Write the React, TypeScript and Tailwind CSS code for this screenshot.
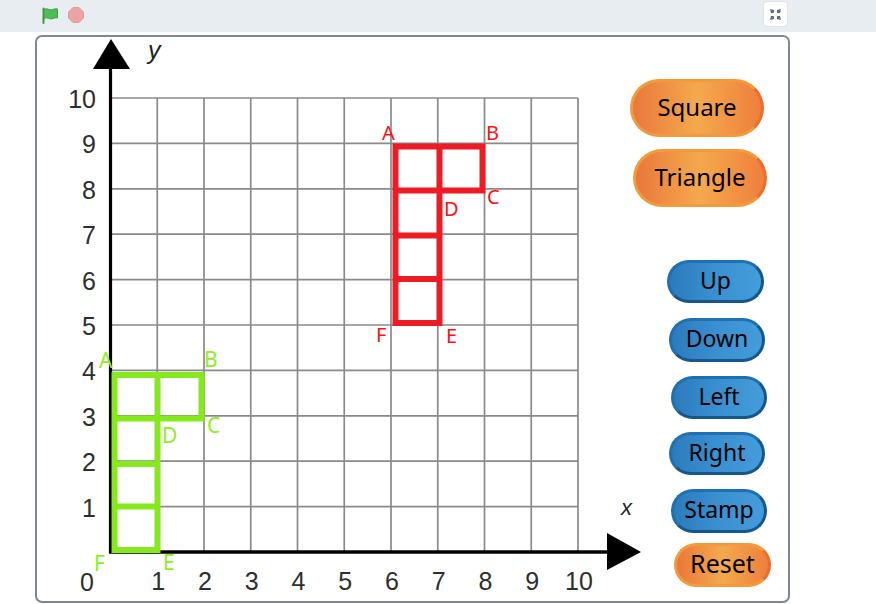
import React from "react";

const gx = (k: number) => 110.5 + 46.75 * k;
const gy = (k: number) => 552 - 45.4 * k;

const ORANGE =
  "border-[3px] border-[#f39a3a] border-r-[#ec6c2c] bg-linear-to-r from-[#e9773c] via-[#f4a94d] to-[#ee7f3c]";
const BLUE =
  "border-[3px] border-[#1f70b0] border-b-[#15578d] border-r-[#15578d] bg-linear-to-r from-[#2c7bbd] via-[#3a90d0] to-[#449cda]";

function Btn({ label, cls }: { label: string; cls: string }) {
  return (
    <div
      className={`absolute flex items-center justify-center rounded-full text-black leading-none pb-[3px] font-['Noto_Sans','Open_Sans',sans-serif] ${cls}`}
    >
      {label}
    </div>
  );
}

export default function App() {
  const xs = Array.from({ length: 11 }, (_, i) => i);
  const lab = "font-['Liberation_Sans',Arial,sans-serif]";
  const letter = "font-['Noto_Sans','Open_Sans',sans-serif]";
  return (
    <div className="w-[876px] h-[604px] bg-white overflow-hidden">
      <div className="h-[32px] bg-[#e8edf1] flex items-center justify-between pl-[42px] pr-[88px]">
        <div className="flex items-center gap-[9px] mt-[-2px]">
          <svg width="17" height="17" viewBox="0 0 17 17">
            <path d="M1.5 1.5 L1.5 16" stroke="#3f9b3a" strokeWidth="2" strokeLinecap="round" />
            <path
              d="M2 2.5 C5 0.5 8 4 11 2.5 C13 1.6 14.5 1.5 15.5 2 L15.5 11 C14 10.5 12.5 10.8 11 11.5 C8 13 5 9.5 2 11.5 Z"
              fill="#4cbf56"
              stroke="#45993d"
              strokeWidth="1"
              strokeLinejoin="round"
            />
          </svg>
          <svg width="16" height="16" viewBox="0 0 16 16">
            <polygon
              points="5,0.5 11,0.5 15.5,5 15.5,11 11,15.5 5,15.5 0.5,11 0.5,5"
              fill="#eca3a3"
              stroke="#e59a9a"
              strokeWidth="1"
              strokeLinejoin="round"
            />
          </svg>
        </div>
        <div className="w-[25px] h-[26px] mt-[-4px] bg-white border border-[#dfe3ea] rounded-[4px] flex items-center justify-center">
          <svg width="13" height="13" viewBox="0 0 13 13" fill="#575e75">
            <polygon points="1,1 5,5 5,2" />
            <polygon points="1,1 5,5 2,5" />
            <polygon points="12,1 8,5 8,2" />
            <polygon points="12,1 8,5 11,5" />
            <polygon points="1,12 5,8 5,11" />
            <polygon points="1,12 5,8 2,8" />
            <polygon points="12,12 8,8 8,11" />
            <polygon points="12,12 8,8 11,8" />
          </svg>
        </div>
      </div>

      <div className="relative ml-[35px] mt-[3px] w-[755px] h-[568px] border-2 border-[#7f8797] rounded-[7px] overflow-hidden bg-white">
        <svg width="751" height="564" viewBox="37 37 751 564" className="block">
          {xs.slice(1).map((k) => (
            <line key={"v" + k} x1={gx(k)} x2={gx(k)} y1={gy(10)} y2={gy(0)} stroke="#8a8a8a" strokeWidth="1.7" />
          ))}
          {xs.slice(1).map((k) => (
            <line key={"h" + k} x1={gx(0)} x2={gx(10)} y1={gy(k)} y2={gy(k)} stroke="#8a8a8a" strokeWidth="1.7" />
          ))}
          <line x1={110.5} x2={110.5} y1={553} y2={66} stroke="#000" strokeWidth="3.2" />
          <polygon points="111,39 93,69 130,69" fill="#000" />
          <line x1={109} x2={610} y1={552} y2={552} stroke="#000" strokeWidth="3.5" />
          <polygon points="641,552 607,533 607,570" fill="#000" />

          <g fontSize="25" fill="#2e2e2e" className={lab}>
            {xs.slice(1).map((k) => (
              <text key={"yl" + k} x={96} y={gy(k) + 10} textAnchor="end">
                {k}
              </text>
            ))}
            <text x={87} y={591} textAnchor="middle">0</text>
            {xs.slice(1).map((k) => (
              <text key={"xl" + k} x={gx(k) + 1} y={590} textAnchor="middle">
                {k}
              </text>
            ))}
          </g>
          <text x={148} y={59} fontSize="25" fontStyle="italic" fill="#222" className={lab}>
            y
          </text>
          <text x={621} y={515} fontSize="22" fontStyle="italic" fill="#222" className={lab}>
            x
          </text>

          <g fill="none" stroke="#85e91c" strokeWidth="6">
            <path d="M114.5 375 H201.5 V418.5 H157.5 V550 H114.5 Z" />
            <path d="M157.5 375 V418.5 M114.5 418.5 H157.5 M114.5 464 H157.5 M114.5 506.5 H157.5" />
          </g>
          <g fill="none" stroke="#ed1c24" strokeWidth="6">
            <path d="M395.5 146.5 H482.5 V190.5 H439.5 V323 H395.5 Z" />
            <path d="M439.5 146.5 V190.5 M395.5 190.5 H439.5 M395.5 235.5 H439.5 M395.5 279 H439.5" />
          </g>

          <g fontSize="20" fill="#ff1010" className={letter}>
            <text x={382} y={140}>A</text>
            <text x={486} y={140}>B</text>
            <text x={487} y={204}>C</text>
            <text x={444} y={216}>D</text>
            <text x={376} y={342}>F</text>
            <text x={446} y={343}>E</text>
          </g>
          <g fontSize="21" fill="#8cee26" className={letter}>
            <text x={99} y={368}>A</text>
            <text x={204} y={367}>B</text>
            <text x={207} y={433}>C</text>
            <text x={162} y={443}>D</text>
            <text x={94} y={571}>F</text>
            <text x={163} y={570}>E</text>
          </g>
        </svg>

        <Btn label="Square" cls={`${ORANGE} text-[24px] left-[593px] top-[42px] w-[134px] h-[58px]`} />
        <Btn label="Triangle" cls={`${ORANGE} text-[24px] left-[596px] top-[112px] w-[134px] h-[58px]`} />
        <Btn label="Up" cls={`${BLUE} text-[23px] left-[630px] top-[223px] w-[97px] h-[43px]`} />
        <Btn label="Down" cls={`${BLUE} text-[23px] left-[632px] top-[281px] w-[96px] h-[44px]`} />
        <Btn label="Left" cls={`${BLUE} text-[23px] left-[634px] top-[339px] w-[96px] h-[43px]`} />
        <Btn label="Right" cls={`${BLUE} text-[23px] left-[632px] top-[395px] w-[96px] h-[43px]`} />
        <Btn label="Stamp" cls={`${BLUE} text-[23px] left-[634px] top-[452px] w-[96px] h-[44px]`} />
        <Btn label="Reset" cls={`${ORANGE} text-[25px] left-[637px] top-[506px] w-[97px] h-[44px]`} />
      </div>
    </div>
  );
}
